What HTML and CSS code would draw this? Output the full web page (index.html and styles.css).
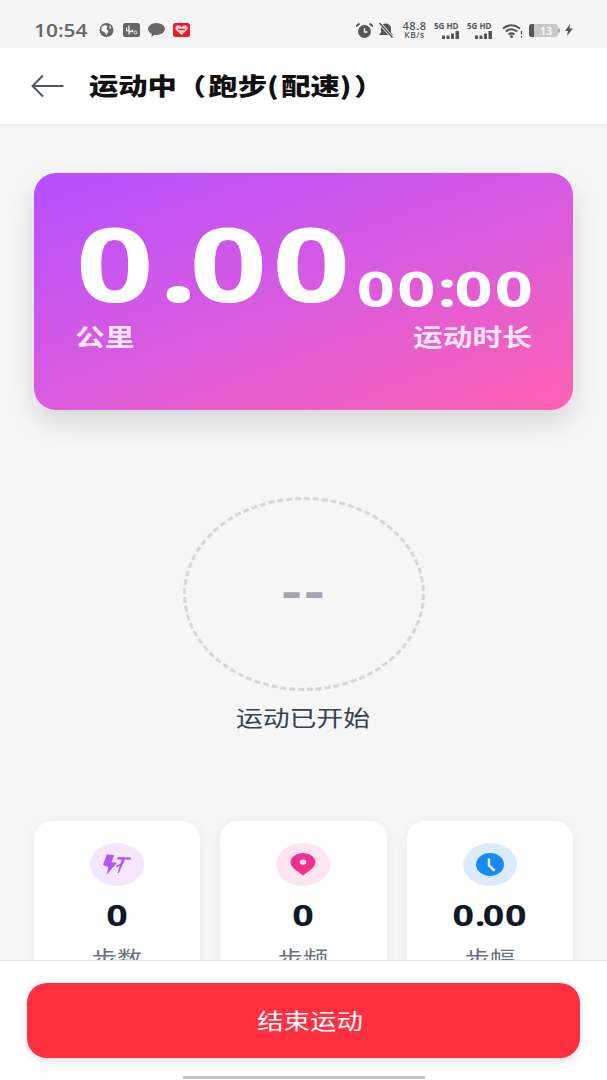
FILE: index.html
```html
<!DOCTYPE html>
<html lang="zh-CN">
<head>
  <meta charset="UTF-8">
  <meta name="viewport" content="width=device-width, initial-scale=1.0">
  <title>运动中</title>
  <link rel="stylesheet" href="styles.css">
</head>
<body>
<div class="app">

  <div class="statusbar">
    <span class="clock">10:54</span>
    <svg class="ic-globe" viewBox="0 0 14 14"><circle cx="7" cy="7" r="7" fill="#666"/><path d="M2 4l3-2 3 1-1 3 2 2-2 4-2-3-3-1zM10 2l2 3-2 1z" fill="#f5f5f5"/></svg>
    <svg class="ic-square" viewBox="0 0 17 14"><rect width="17" height="14" rx="2.5" fill="#666"/><path d="M6 2.500v9M3.500 4.500v3H6M6 8.500h3.500v-2" stroke="#f5f5f5" stroke-width="1.300" fill="none"/><circle cx="12.500" cy="9.500" r="1.500" fill="none" stroke="#f5f5f5"/></svg>
    <svg class="ic-chat" viewBox="0 0 17 14"><ellipse cx="8.500" cy="6" rx="8.500" ry="6" fill="#666"/><path d="M4 10l-.5 4 4-3z" fill="#666"/></svg>
    <svg class="ic-heart" viewBox="0 0 17 14"><rect width="17" height="14" rx="2.500" fill="#ee1c25"/><path d="M8.500 12L3 7a2.800 2.800 0 0 1 3-4.500q1.500.3 2.500 1.500 1-1.200 2.500-1.500A2.800 2.800 0 0 1 14 7z" fill="#fbd0d0"/><path d="M5 6.500h7" stroke="#ee1c25" stroke-width="1.300"/></svg>

    <div class="status-right">
      <svg class="ic-alarm" viewBox="0 0 17 15"><circle cx="8.500" cy="8.500" r="6.500" fill="#555"/><path d="M8.500 5v4h3" stroke="#f5f5f5" stroke-width="1.400" fill="none"/><path d="M0 3.500L3.500 0.500M17 3.500L13.500 0.500" stroke="#555" stroke-width="2"/></svg>
      <svg class="ic-bell" viewBox="0 0 16 16"><path d="M8 1.500a5 5 0 0 1 5 5v4l2 2.500H1l2-2.500v-4a5 5 0 0 1 5-5z" fill="#555"/><path d="M1.500 1L14.500 15.500" stroke="#f5f5f5" stroke-width="3"/><path d="M1.500 1L14.500 15.500" stroke="#555" stroke-width="1.500"/></svg>
      <div class="speed"><span class="speed-num">48.8</span><span class="speed-unit">KB/s</span></div>
      <div class="signal">
        <span class="signal-text">5G HD</span>
        <svg viewBox="0 0 28 8"><path d="M8 4.500h3V8H8zM12.500 4.500h3V8h-3zM17 2.500h3V8h-3zM21.500 0h3.500v8h-3.500z" fill="#555"/></svg>
      </div>
      <div class="signal">
        <span class="signal-text">5G HD</span>
        <svg viewBox="0 0 28 8"><path d="M8 4.500h3V8H8zM12.500 4.500h3V8h-3zM17 2.500h3V8h-3zM21.500 0h3.500v8h-3.500z" fill="#555"/></svg>
      </div>
      <svg class="ic-wifi" viewBox="0 0 21 15"><path d="M1 5.500q8-6.500 17 0M3.800 8.500q5.700-4.500 11.400 0M6.500 11.500q3-2.300 6 0" stroke="#555" stroke-width="2.100" fill="none"/><circle cx="9.500" cy="13.500" r="1.500" fill="#555"/><path d="M19.500 8v3.500M19.500 13v1.500" stroke="#555" stroke-width="1.400"/></svg>
      <div class="battery"><span class="battery-body"><span class="battery-fill"></span><span class="battery-num">13</span></span><span class="battery-tip"></span></div>
      <svg class="ic-charge" viewBox="0 0 8 12"><path d="M5 0L0 7h3l-1 5 6-7.500H4.500z" fill="#555"/></svg>
    </div>
  </div>

  <header class="topbar">
    <svg class="back" viewBox="0 0 33 24"><path d="M33 12H2M12.500 1.500L2 12l10.500 10.500" stroke="#4b5563" stroke-width="2" fill="none"/></svg>
    <h1 class="title">运动中<span class="title-open">（</span>跑步<span class="title-paren">(</span>配速<span class="title-paren">)</span>）</h1>
  </header>

  <main class="content">
    <section class="summary">
      <div class="summary-col">
        <div class="distance">0<span class="distance-dot">.</span>00</div>
        <div class="summary-label">公里</div>
      </div>
      <div class="summary-col summary-col-right">
        <div class="duration">00<span class="duration-colon">:</span>00</div>
        <div class="summary-label summary-label-right">运动时长</div>
      </div>
    </section>

    <div class="pace-ring"><span class="pace-value">--</span></div>
    <p class="pace-note">运动已开始</p>

    <section class="stats">
      <div class="stat">
        <span class="stat-icon stat-icon-purple">
          <svg viewBox="0 0 30 24"><path d="M4 1l8 1-3 7.500 6 .5L4 23l1.700-8L0 12.500z" fill="#b455f0"/><path d="M15.500 4l14.500.5-.6 2.500-6-.4L17 21h-1.400l4.300-14-4.700-.4zM14 13l8-3-.5 1.500-6.800 3.500z" fill="#b455f0"/></svg>
        </span>
        <div class="stat-value">0</div>
        <div class="stat-label">步数</div>
      </div>
      <div class="stat">
        <span class="stat-icon stat-icon-pink">
          <svg viewBox="0 0 26 24"><path d="M13 23.500C9 20 0 16 0 9.500a13 9.500 0 0 1 26 0C26 16 17 20 13 23.500z" fill="#f0308f"/><ellipse cx="13" cy="9.500" rx="3.500" ry="2.800" fill="#fde4f1"/></svg>
        </span>
        <div class="stat-value">0</div>
        <div class="stat-label">步频</div>
      </div>
      <div class="stat">
        <span class="stat-icon stat-icon-blue">
          <svg viewBox="0 0 27 22"><ellipse cx="13.500" cy="11" rx="13.500" ry="11" fill="#1a88f5"/><path d="M12.500 5v7l5.500 5" stroke="#e3effd" stroke-width="2.400" fill="none"/></svg>
        </span>
        <div class="stat-value">0<span class="stat-dot">.</span>00</div>
        <div class="stat-label">步幅</div>
      </div>
    </section>
  </main>

  <footer class="bottom">
    <button class="end-btn" type="button"><span class="end-text">结束运动</span></button>
    <div class="home-bar"></div>
  </footer>

</div>
</body>
</html>
```

FILE: styles.css
```css
html, body {
  margin: 0;
  height: 100%;
}

body {
  font-family: "Noto Sans CJK SC", "Noto Sans", sans-serif;
  background: #f6f6f7;
  overflow: hidden;
}

.app {
  width: 607px;
  height: 1080px;
  display: flex;
  flex-direction: column;
}

/* status bar */
.statusbar {
  height: 48px;
  flex: none;
  background: #f5f5f5;
  display: flex;
  align-items: center;
  padding: 12px 34px 0;
  box-sizing: border-box;
  color: #666;
}
.clock {
  font-family: "Open Sans", sans-serif;
  font-size: 18px;
  font-weight: 600;
  width: 65px;
  transform: scaleX(1.16);
  transform-origin: left center;
}
.statusbar svg { display: block; flex: none; }
.ic-globe { width: 15px; height: 14px; margin-right: 9px; }
.ic-square { width: 17px; height: 14px; margin-right: 8px; }
.ic-chat { width: 17px; height: 14px; margin-right: 8px; }
.ic-heart { width: 17px; height: 14px; }

.status-right {
  margin-left: auto;
  display: flex;
  align-items: center;
}
.ic-alarm { width: 17px; height: 15px; margin-right: 5px; }
.ic-bell { width: 16px; height: 16px; margin-right: 7px; }
.speed {
  width: 27px;
  margin-right: 6px;
  display: flex;
  flex-direction: column;
  align-items: center;
  font-family: "Open Sans", sans-serif;
  font-weight: 600;
  color: #555;
}
.speed-num { font-size: 11px; line-height: 10px; letter-spacing: .5px; }
.speed-unit { font-size: 8.500px; line-height: 8px; letter-spacing: .5px; }
.signal {
  width: 28px;
  margin-right: 5px;
  display: flex;
  flex-direction: column;
  font-family: "Open Sans", sans-serif;
  font-size: 8px;
  font-weight: 700;
  white-space: nowrap;
  color: #555;
}
.signal-text { line-height: 10px; }
.signal svg { width: 28px; height: 8px; }
.ic-wifi { width: 21px; height: 15px; margin: 0 6px 0 2px; }
.battery { display: flex; align-items: center; margin-right: 5px; }
.battery-body {
  width: 29px;
  height: 13px;
  border-radius: 3px;
  background: #c9c9c9;
  display: flex;
}
.battery-fill { width: 5px; background: #555; flex: none; border-radius: 3px 0 0 3px; }
.battery-num {
  flex: 1;
  text-align: center;
  font-family: "Open Sans", sans-serif;
  font-size: 11px;
  font-weight: 700;
  line-height: 13px;
  color: #f5f5f5;
}
.battery-tip { width: 2px; height: 5px; background: #aaa; border-radius: 0 2px 2px 0; }
.ic-charge { width: 8px; height: 12px; }

/* top bar */
.topbar {
  height: 76px;
  flex: none;
  background: #fff;
  display: flex;
  align-items: center;
  padding-left: 30px;
  box-sizing: border-box;
  box-shadow: 0 1px 3px rgba(0,0,0,.06);
  position: relative;
  z-index: 1;
}
.back { width: 34px; height: 24px; flex: none; }
.title {
  margin: 0 0 0 25px;
  padding-bottom: 3px;
  font-size: 24px;
  line-height: 32px;
  font-weight: 900;
  color: #111;
  white-space: nowrap;
  transform: scaleX(1.22);
  transform-origin: left center;
}
.title-open { margin-right: 2px; }
.title-paren { letter-spacing: 2px; }

/* main */
.content {
  flex: 1;
  min-height: 0;
  overflow: hidden;
  padding: 49px 34px 0;
  display: flex;
  flex-direction: column;
  align-items: center;
}

.summary {
  flex: none;
  width: 539px;
  height: 237px;
  box-sizing: border-box;
  padding: 36px 42px 0;
  border-radius: 22px;
  background: linear-gradient(160deg, #b44fff 0%, #d85be0 50%, #ff62b2 100%);
  box-shadow: 0 12px 28px rgba(0,0,0,.13);
  display: flex;
  justify-content: space-between;
  color: #fff;
}
.summary-col { display: flex; flex-direction: column; justify-content: flex-end; height: 142px; }
.summary-col-right { align-items: flex-end; }
.distance {
  font-family: "Open Sans", sans-serif;
  font-weight: 700;
  font-size: 102px;
  line-height: 80px;
  letter-spacing: 4px;
  margin-bottom: 18px;
  transform: scaleX(1.33);
  transform-origin: left center;
}
.distance-dot { letter-spacing: -6px; }
.duration {
  font-family: "Open Sans", sans-serif;
  font-weight: 700;
  font-size: 49px;
  line-height: 40px;
  letter-spacing: 1.600px;
  margin: 0 -4px 13px 0;
  transform: scaleX(1.36);
  transform-origin: right center;
}
.duration-colon { letter-spacing: -1.500px; }
.summary-label {
  font-size: 24px;
  line-height: 30px;
  font-weight: 700;
  color: rgba(255,255,255,.85);
  transform: scaleX(1.24);
  transform-origin: left center;
  margin-left: -1px;
}
.summary-label-right {
  transform-origin: right center;
  margin: 0 -1px 0 0;
}

.pace-ring {
  flex: none;
  width: 242px;
  height: 194px;
  margin-top: 87px;
  box-sizing: border-box;
  border: 3px dashed #d6d6d6;
  border-radius: 50%;
  display: flex;
  align-items: center;
  justify-content: center;
}
.pace-value {
  font-family: "DejaVu Sans", sans-serif;
  font-weight: 700;
  font-size: 40px;
  line-height: 40px;
  letter-spacing: 1px;
  color: #a3a3b2;
  transform: scaleX(1.3);
  padding-bottom: 2px;
}
.pace-note {
  flex: none;
  margin: 9px 0 0;
  font-size: 22px;
  line-height: 32px;
  color: #374151;
  transform: scaleX(1.22);
}

.stats {
  flex: none;
  width: 539px;
  margin-top: 89px;
  display: grid;
  grid-template-columns: repeat(3, 1fr);
  gap: 20px;
}
.stat {
  height: 170px;
  background: #fff;
  border-radius: 18px;
  box-shadow: 0 2px 12px rgba(0,0,0,.05);
  box-sizing: border-box;
  padding-top: 22px;
  display: flex;
  flex-direction: column;
  align-items: center;
}
.stat-icon {
  width: 54px;
  height: 43px;
  border-radius: 50%;
  display: flex;
  align-items: center;
  justify-content: center;
  flex: none;
}
.stat-icon-purple { background: #f6e6fd; }
.stat-icon-pink { background: #fde4f1; }
.stat-icon-blue { background: #dcebfc; }
.stat-icon svg { width: 28px; height: 23px; display: block; }
.stat-value {
  margin-top: 11px;
  font-family: "Open Sans", sans-serif;
  font-weight: 700;
  font-size: 28px;
  line-height: 36px;
  letter-spacing: .6px;
  color: #111827;
  transform: scaleX(1.34);
}
.stat-dot { letter-spacing: -2px; }
.stat-label {
  margin-top: 9px;
  font-size: 21px;
  line-height: 30px;
  color: #6b7280;
  transform: scaleX(1.2);
}

/* bottom */
.bottom {
  flex: none;
  height: 120px;
  background: #fff;
  border-top: 1px solid #e5e5e5;
  box-sizing: border-box;
  padding: 22px 27px 0;
  display: flex;
  flex-direction: column;
  align-items: center;
  position: relative;
  z-index: 1;
}
.end-btn {
  width: 553px;
  height: 75px;
  flex: none;
  border: 0;
  padding: 0 0 4px 14px;
  border-radius: 20px;
  background: #ff2f3f;
  box-shadow: 0 3px 8px rgba(0,0,0,.12);
  color: #fff;
  font-family: inherit;
  font-size: 22px;
}
.end-text { display: inline-block; transform: scaleX(1.2); }
.home-bar {
  width: 242px;
  height: 3px;
  margin-top: 18px;
  background: #c4c4c4;
  flex: none;
}
```
